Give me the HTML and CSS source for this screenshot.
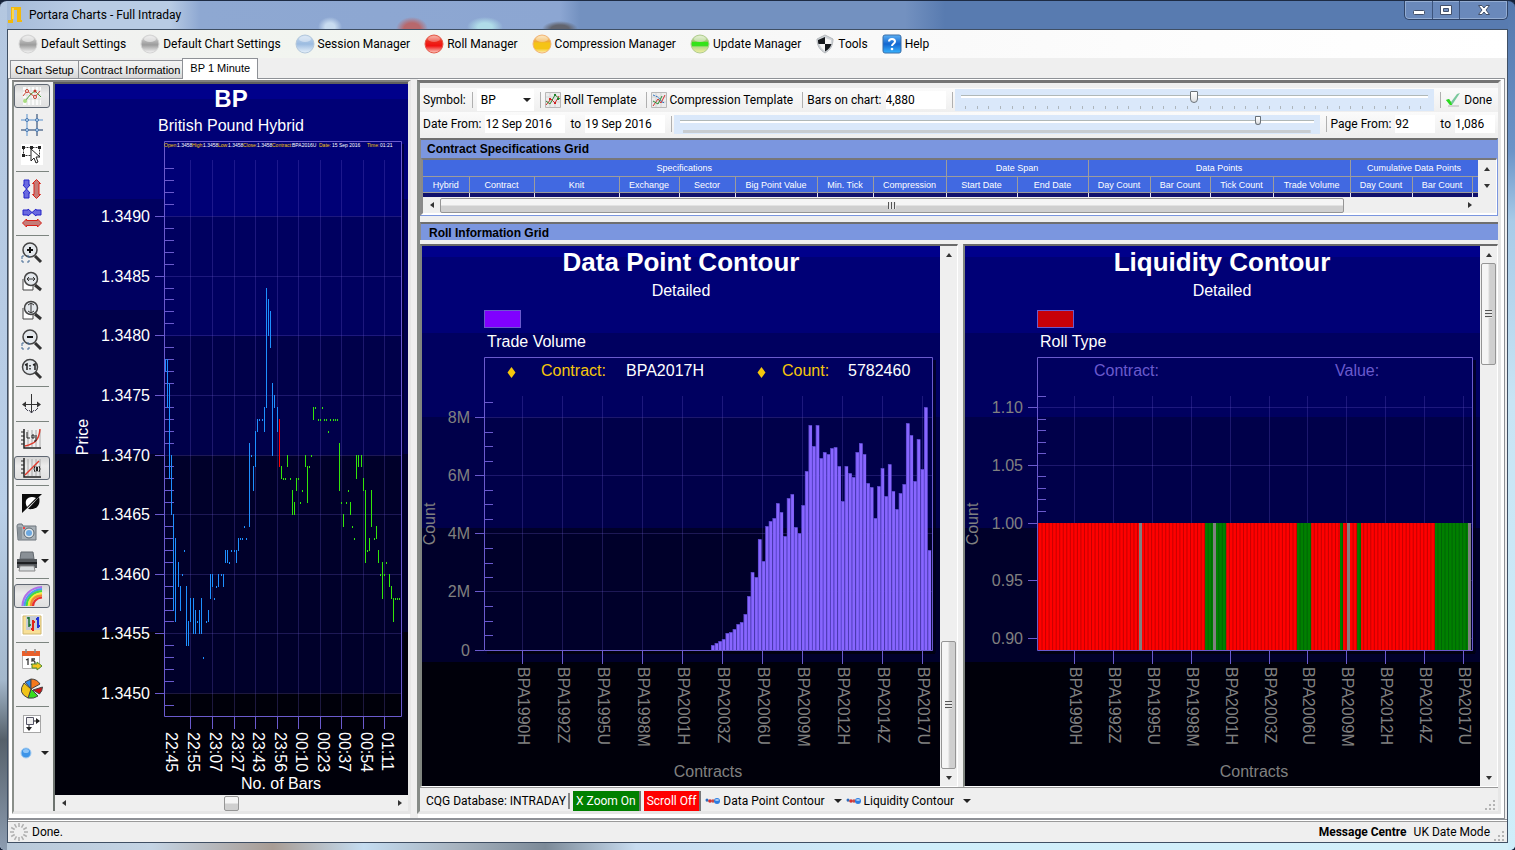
FILE: index.html
```html
<!DOCTYPE html>
<html lang="en">
<head>
<meta charset="utf-8">
<title>Portara Charts - Full Intraday</title>
<link rel="stylesheet" href="styles.css">
</head>
<body>
<div class="window">
  <header class="titlebar">
    <svg class="logo" width="16" height="18" viewBox="0 0 16 18"><path d="M3 1h10v13h1v2H9V4H6v9H5v4H0v-3h3z" fill="#f2b90c"/><path d="M4 2h2v11H4z" fill="#fcd64a"/></svg>
    <h1 class="title">Portara Charts - Full Intraday</h1>
    <div class="window-buttons">
      <button class="wbtn" aria-label="Minimise"><svg width="14" height="12" viewBox="0 0 14 12"><rect x="1.500" y="6.500" width="11" height="4" rx="1" fill="#fff" stroke="#43506a"/></svg></button>
      <button class="wbtn" aria-label="Maximise"><svg width="14" height="12" viewBox="0 0 14 12"><path d="M1.500 1.500h11v9h-11z" fill="#fff" stroke="#43506a"/><path d="M4.500 4.500h5v3h-5z" fill="#7390bf" stroke="#43506a"/></svg></button>
      <button class="wbtn wbtn-close" aria-label="Close"><svg width="14" height="12" viewBox="0 0 14 12"><path d="M1.500 1.500h3.500L7 4l2-2.500h3.500L9 6l3.500 4.500H9L7 8l-2 2.500H1.500L5 6z" fill="#fff" stroke="#43506a"/></svg></button>
    </div>
  </header>

  <div class="client">
    <svg class="defs" width="0" height="0" aria-hidden="true">
      <defs>
        <linearGradient id="gGray" x2="0" y2="1"><stop offset="0" stop-color="#e4e4e4"/><stop offset=".35" stop-color="#b4b4b4"/><stop offset=".55" stop-color="#9c9c9c"/><stop offset="1" stop-color="#f8f8f8"/></linearGradient>
        <linearGradient id="gBlue" x2="0" y2="1"><stop offset="0" stop-color="#c9dcf0"/><stop offset=".5" stop-color="#9bbbe0"/><stop offset="1" stop-color="#e8f2fb"/></linearGradient>
        <linearGradient id="gRed" x2="0" y2="1"><stop offset="0" stop-color="#f4a090"/><stop offset=".35" stop-color="#ec2a1c"/><stop offset=".6" stop-color="#f01010"/><stop offset="1" stop-color="#fbd0c4"/></linearGradient>
        <linearGradient id="gAmber" x2="0" y2="1"><stop offset="0" stop-color="#fbe2b0"/><stop offset=".35" stop-color="#efa83c"/><stop offset=".45" stop-color="#f5c416"/><stop offset=".75" stop-color="#f5c416"/><stop offset="1" stop-color="#fdf0c0"/></linearGradient>
        <linearGradient id="gGreen" x2="0" y2="1"><stop offset="0" stop-color="#dcecc4"/><stop offset=".35" stop-color="#9cc86c"/><stop offset=".42" stop-color="#2ee612"/><stop offset=".6" stop-color="#3ade20"/><stop offset=".66" stop-color="#b4d888"/><stop offset="1" stop-color="#f4f0a0"/></linearGradient>
        <linearGradient id="gHelp" x2="0" y2="1"><stop offset="0" stop-color="#5cb0f4"/><stop offset=".5" stop-color="#1466d0"/><stop offset="1" stop-color="#38b4ff"/></linearGradient>
      </defs>
    </svg>

    <nav class="menu">
      <button class="menu-item"><svg width="20" height="20" viewBox="0 0 20 20"><circle cx="10" cy="10" r="9" fill="url(#gGray)" stroke="#d4d4d4"/><ellipse cx="10" cy="5" rx="6" ry="3" fill="#fff" opacity=".5"/></svg>Default Settings</button>
      <button class="menu-item"><svg width="20" height="20" viewBox="0 0 20 20"><circle cx="10" cy="10" r="9" fill="url(#gGray)" stroke="#d4d4d4"/><ellipse cx="10" cy="5" rx="6" ry="3" fill="#fff" opacity=".5"/></svg>Default Chart Settings</button>
      <button class="menu-item"><svg width="20" height="20" viewBox="0 0 20 20"><circle cx="10" cy="10" r="9" fill="url(#gBlue)" stroke="#b4c8dc"/><ellipse cx="10" cy="5" rx="6" ry="3" fill="#fff" opacity=".4"/></svg>Session Manager</button>
      <button class="menu-item"><svg width="20" height="20" viewBox="0 0 20 20"><circle cx="10" cy="10" r="9" fill="url(#gRed)" stroke="#e45a4a"/><ellipse cx="10" cy="5" rx="6" ry="3" fill="#fff" opacity=".3"/></svg>Roll Manager</button>
      <button class="menu-item"><svg width="20" height="20" viewBox="0 0 20 20"><circle cx="10" cy="10" r="9" fill="url(#gAmber)" stroke="#f2b478"/><ellipse cx="10" cy="5" rx="6" ry="3" fill="#fff" opacity=".35"/></svg>Compression Manager</button>
      <button class="menu-item"><svg width="20" height="20" viewBox="0 0 20 20"><circle cx="10" cy="10" r="9" fill="url(#gGreen)" stroke="#b0cc90"/><ellipse cx="10" cy="5" rx="6" ry="3" fill="#fff" opacity=".4"/></svg>Update Manager</button>
      <button class="menu-item"><svg width="20" height="20" viewBox="0 0 20 20"><path d="M10 1l8 4c0 7-3 11-8 14C5 16 2 12 2 5z" fill="#d0d4d8" stroke="#b4b8bc"/><path d="M10 3v7H3.500C3 8 3 7 3 6zM10 10h6.500c-1 3-3 5.500-6.500 7.500z" fill="#15181c"/><path d="M10 4l6 2c0 2 0 3-.5 4H10zM4.500 10H10v7C7.500 15 5.500 13 4.500 10z" fill="#f4f4f4"/></svg>Tools</button>
      <button class="menu-item"><svg width="20" height="20" viewBox="0 0 20 20"><rect x="1" y="1" width="18" height="18" rx="2" fill="url(#gHelp)" stroke="#3a6ea8"/><path d="M7 7.500C7 4 13 4 13 7.500c0 2-3 2.500-3 4.500" fill="none" stroke="#fff" stroke-width="2"/><circle cx="10" cy="15" r="1.300" fill="#fff"/></svg>Help</button>
    </nav>

    <div class="tabs" role="tablist">
      <button class="tab" role="tab">Chart Setup</button>
      <button class="tab" role="tab">Contract Information</button>
      <button class="tab tab-active" role="tab" aria-selected="true">BP 1 Minute</button>
    </div>

    <main class="workspace">
      <section class="price-panel">
        <div class="tools">
          <button class="tool pressed" aria-label="Crosshair"><svg width="22" height="22" viewBox="0 0 22 22"><path d="M2 2h18v18H2z" fill="#fafafa"/><path d="M6 2v18M10 2v18M14 2v18M18 2v18M2 6h18M2 10h18M2 14h18" stroke="#d8dcd8" fill="none"/><path d="M4 16l6-7 4-3 6 6" fill="none" stroke="#4a9a3c"/><path d="M2 11l4-5 8 6 5-6" fill="none" stroke="#d04a3c"/><g fill="#fff" stroke="#c03a2c"><circle cx="6" cy="6" r="1.500"/><circle cx="14" cy="12" r="1.500"/></g><circle cx="14" cy="6" r="1.500" fill="#c03a2c"/><circle cx="4" cy="16" r="2" fill="#a8dc80"/></svg></button>
          <button class="tool" aria-label="Grid"><svg width="22" height="22" viewBox="0 0 22 22"><path d="M6 0v22M0 6h22" stroke="#8ab0d8" stroke-width="1.500"/><path d="M16 0v22M0 16h22" stroke="#5c7494" stroke-width="1.500"/><g fill="#c4dcf4" stroke="#4878b0"><circle cx="6" cy="6" r="1.500"/><circle cx="16" cy="6" r="1.500"/><circle cx="6" cy="16" r="1.500"/><circle cx="16" cy="16" r="1.500"/></g></svg></button>
          <button class="tool" aria-label="Select"><svg width="22" height="22" viewBox="0 0 22 22"><path d="M0 1h22v21H0z" fill="#fff"/><path d="M2.500 4.500h16v8h-16z" fill="none" stroke="#333" stroke-dasharray="2 1"/><path d="M1 3h3v3H1zM9 3h3v3H9zM17 3h3v3h-3zM1 11h3v3H1z" fill="#222"/><path d="M10 6v12l3-3 2 5 2-1-2-5h4z" fill="#fff" stroke="#222"/></svg></button>
          <hr class="tool-sep">
          <button class="tool" aria-label="Fit vertical"><svg width="22" height="22" viewBox="0 0 22 22"><path d="M3 2h5v5h1l-3.500 4L2 7h1zM3 20h5v-5h1l-3.500-4L2 15h1z" fill="#6a6ae0" stroke="#2424c8"/><path d="M15.500 1.500l4 4h-1.500v11h1.500l-4 4-4-4H13v-11h-1.500z" fill="#c47c78" stroke="#d82018"/></svg></button>
          <button class="tool" aria-label="Fit horizontal"><svg width="22" height="22" viewBox="0 0 22 22"><path d="M2 3h5V2l4 3.500L7 9V8H2zM20 3h-5V2l-4 3.500L15 9V8h5z" fill="#6a6ae0" stroke="#2424c8"/><path d="M1.500 16l4-4v1.500h11V12l4 4-4 4v-1.500h-11V20z" fill="#c47c78" stroke="#d82018"/></svg></button>
          <hr class="tool-sep">
          <button class="tool" aria-label="Zoom in"><svg width="22" height="22" viewBox="0 0 22 22"><path d="M14 14l6 6" stroke="#333" stroke-width="3"/><circle cx="9" cy="8" r="7" fill="#e4e8ec" stroke="#444" stroke-width="1.500"/><path d="M6 8h6M9 5v6" stroke="#111" stroke-width="2"/><path d="M1 17v-3h2M6 14h2v2M8 18v2H6M3 20H1v-2" fill="none" stroke="#456a94"/></svg></button>
          <button class="tool" aria-label="Zoom horizontally"><svg width="22" height="22" viewBox="0 0 22 22"><path d="M2 8v11h10v-5" fill="#fff" stroke="#444"/><path d="M14 14l6 5" stroke="#333" stroke-width="3"/><circle cx="10" cy="8" r="6.500" fill="#e4e8ec" stroke="#444" stroke-width="1.500"/><path d="M6 8h8M8 6L6 8l2 2M12 6l2 2-2 2" fill="none" stroke="#333"/></svg></button>
          <button class="tool" aria-label="Zoom vertically"><svg width="22" height="22" viewBox="0 0 22 22"><path d="M2 8v11h10v-5" fill="#fff" stroke="#444"/><path d="M14 14l6 5" stroke="#333" stroke-width="3"/><circle cx="10" cy="8" r="6.500" fill="#e4e8ec" stroke="#444" stroke-width="1.500"/><path d="M10 3v10M7 5l3-2 3 2M7 11l3 2 3-2" fill="none" stroke="#333"/></svg></button>
          <button class="tool" aria-label="Zoom out"><svg width="22" height="22" viewBox="0 0 22 22"><path d="M14 14l6 6" stroke="#333" stroke-width="3"/><circle cx="9" cy="8" r="7" fill="#e4e8ec" stroke="#444" stroke-width="1.500"/><path d="M6 8h6" stroke="#111" stroke-width="2"/><path d="M1 17v-3h2M6 14h2v2M8 18v2H6M3 20H1v-2" fill="none" stroke="#456a94"/></svg></button>
          <button class="tool" aria-label="Actual size"><svg width="22" height="22" viewBox="0 0 22 22"><path d="M14 14l6 6" stroke="#333" stroke-width="3"/><circle cx="9" cy="9" r="7.500" fill="#e4e8ec" stroke="#444" stroke-width="1.500"/><path d="M4 7l2-1v6M12 7l2-1v6M9 7v1.500M9 10v1.500" fill="none" stroke="#222" stroke-width="1.500"/></svg></button>
          <hr class="tool-sep">
          <button class="tool" aria-label="Pan"><svg width="22" height="22" viewBox="0 0 22 22"><path d="M10.500 1v19M3 11.500h15" stroke="#333"/><path d="M1 11.500l4-3v6zM20 11.500l-4-3v6z" fill="#333"/><path d="M8 17l2.500 3 2.500-3M4 15l3 3M17 15l-3 3" stroke="#445" fill="none"/></svg></button>
          <hr class="tool-sep">
          <button class="tool" aria-label="Logarithmic scale"><svg width="22" height="22" viewBox="0 0 22 22"><path d="M3 1v19h17" fill="none" stroke="#222" stroke-width="1.500"/><path d="M7 2v17M11 2v17M15 2v17M19 2v17" stroke="#a8a8a8"/><path d="M0 4h3M0 8h3M0 12h3M0 16h3" stroke="#222"/><path d="M4 18c9-2 14-5 15-17" fill="none" stroke="#e03a2c" stroke-width="1.500"/><path d="M6 4v6h3M11 7v3h2V7zM15 7v6h-2" fill="none" stroke="#222"/></svg></button>
          <button class="tool pressed" aria-label="Linear scale"><svg width="22" height="22" viewBox="0 0 22 22"><path d="M3 1v19h17" fill="none" stroke="#222" stroke-width="1.500"/><path d="M7 2v17M11 2v17M15 2v17M19 2v17" stroke="#a8a8a8"/><path d="M0 4h3M0 8h3M0 12h3M0 16h3" stroke="#222"/><path d="M4 18L18 4" stroke="#e03a2c" stroke-width="1.500"/><path d="M14 9q-2 3 0 6M18 9q2 3 0 6M15.500 10h1v4h-1z" fill="none" stroke="#222"/></svg></button>
          <hr class="tool-sep">
          <button class="tool" aria-label="Invert"><svg width="22" height="22" viewBox="0 0 22 22"><path d="M1 2h20L1 21z" fill="#0a0a0a"/><path d="M18 5c2 8-2 13-11 12z" fill="#0a0a0a"/><path d="M6 15C2 8 8 3 15 6z" fill="#fff"/></svg></button>
          <button class="tool split" aria-label="Snapshot"><svg width="22" height="22" viewBox="0 0 22 22"><path d="M1 5q0-2 2-2h3l1 2h13v14H2z" fill="#a8b0b6" stroke="#6c757c"/><path d="M2 6h4v12H2z" fill="#8c959c"/><circle cx="13" cy="12" r="5" fill="#dfe6ea" stroke="#5a656e"/><circle cx="13" cy="12" r="3" fill="#6ca8e0"/><path d="M7 6h2v2H7z" fill="#e44"/></svg><i class="caret"></i></button>
          <button class="tool split" aria-label="Print"><svg width="22" height="22" viewBox="0 0 22 22"><path d="M4 9l1-7h12l1 7z" fill="#8a9096" stroke="#62686e"/><path d="M1 9h20v9H1z" fill="#54585c"/><path d="M1 12h20v2H1z" fill="#1e2022"/><path d="M4 16h14l1 5H3z" fill="#d8dcde" stroke="#888"/></svg><i class="caret"></i></button>
          <hr class="tool-sep">
          <button class="tool pressed" aria-label="Palette"><svg width="22" height="22" viewBox="0 0 22 22"><g fill="none" stroke-width="2.200"><path d="M1.500 21C2 10 10 2.500 21 2" stroke="#b070e8"/><path d="M3.600 21C4 12 11 5 21 4.100" stroke="#4a9af0"/><path d="M5.700 21C6 13 12 7 21 6.200" stroke="#44d844"/><path d="M7.800 21C8 14 13 9 21 8.300" stroke="#f4ec3c"/><path d="M9.900 21C10 15 14 11 21 10.400" stroke="#f08a30"/><path d="M12 21c0-4 3-8 9-8.500" stroke="#e83030"/></g></svg></button>
          <button class="tool" aria-label="Bar style"><svg width="22" height="22" viewBox="0 0 22 22"><path d="M0 0h22v22H0z" fill="#fff"/><path d="M2 2h18v18H2z" fill="#f8e098" stroke="#d0b870"/><path d="M5 2h14v14H5z" fill="#c8ccd4"/><path d="M8 3v10M6 4h2M8 11h2" stroke="#18702c" stroke-width="1.500"/><path d="M12 6v11M10 15h2M12 8h2" stroke="#e02018" stroke-width="2"/><path d="M17 3v11M15 5h2M17 12h2" stroke="#2030d8" stroke-width="2"/></svg></button>
          <hr class="tool-sep">
          <button class="tool" aria-label="Go to date"><svg width="22" height="22" viewBox="0 0 22 22"><path d="M1.500 3.500h17v16h-17z" fill="#fff" stroke="#b0b0b0"/><path d="M1 2h18v5H1z" fill="#e8602c"/><path d="M5 0v4M14 0v4" stroke="#888" stroke-width="1.500"/><path d="M5 11l2-1v6M14 10h-3v2q3-1 3 2t-4 1" fill="none" stroke="#333" stroke-width="1.300"/><path d="M11 15h5v-2l5 4-5 4v-2h-5z" fill="#f4c420" stroke="#4c9030"/></svg></button>
          <button class="tool" aria-label="Pie"><svg width="22" height="22" viewBox="0 0 22 22"><g stroke="#444"><path d="M10 11L4 4l6-3z" fill="#2c8cf0"/><path d="M10 11V1q6 0 9 5z" fill="#f4781c"/><path d="M12 12l9.500-3q0 4-3 7z" fill="#cc1414"/><path d="M10 11l7 7q-4 3-10 2z" fill="#38dc1c"/><path d="M10 11L7 20Q-4 15 3 5z" fill="#f0c418"/></g></svg></button>
          <hr class="tool-sep">
          <button class="tool" aria-label="Arrange"><svg width="22" height="22" viewBox="0 0 22 22"><path d="M2.500 2.500h17v17h-17z" fill="#fff" stroke="#555" stroke-dasharray="1 1"/><path d="M5.500 4.500h7v7h-7z" fill="#f0f0f0" stroke="#556"/><path d="M13 8h5M8 12v5" stroke="#222"/><path d="M19 8l-4-3v6zM8 18l-3-4h6z" fill="#222"/></svg></button>
          <button class="tool split" aria-label="Marker"><svg width="22" height="22" viewBox="0 0 22 22"><circle cx="10" cy="11" r="5" fill="#3c94e8" stroke="#a4ccf0"/><ellipse cx="10" cy="9" rx="3" ry="2" fill="#8cc4f8"/></svg><i class="caret"></i></button>
        </div>
        <div class="price-view">
          <svg class="chart price-chart" id="price" viewBox="55 84 353 711" role="img" aria-label="BP British Pound Hybrid price chart"></svg>
          <div class="hscroll">
            <button class="sb-btn" aria-label="Scroll left"><i class="tri left"></i></button>
            <span class="gap-a"></span><span class="thumb small"></span><span class="gap-b"></span>
            <button class="sb-btn" aria-label="Scroll right"><i class="tri right"></i></button>
          </div>
        </div>
      </section>

      <section class="data-panel">
        <form class="bar bar-first">
          <label for="symbol">Symbol:</label>
          <span class="sep"></span>
          <span class="select-wrap"><select id="symbol" class="field"><option>BP</option></select><i class="caret"></i></span>
          <span class="sep"></span>
          <button type="button" class="bar-btn"><svg width="16" height="16" viewBox="0 0 16 16"><path d="M.5.500h15v15H.5z" fill="#ececec" stroke="#b8b8b8"/><path d="M5 1v14M10 1v14M1 5h14M1 10h14" stroke="#d4d4d4"/><path d="M1 13l5-6 4 4 4-7" fill="none" stroke="#d03030"/><path d="M1 9l4 3 5-9 5 4" fill="none" stroke="#2c8c34"/><path d="M4 6h2v2H4zM9 10h2v2H9z" fill="#d02020"/><path d="M9 2h2v2H9zM12 6h2v2h-2z" fill="#208028"/></svg>Roll Template</button>
          <span class="sep"></span>
          <button type="button" class="bar-btn"><svg width="16" height="16" viewBox="0 0 16 16"><path d="M.5.500h15v15H.5z" fill="#ececec" stroke="#b8b8b8"/><path d="M5 1v14M10 1v14M1 5h14M1 10h14" stroke="#d4d4d4"/><path d="M2 14l5-7 3 4 4-8" fill="none" stroke="#d03030"/><path d="M2 3l5 2 4 5 3 1" fill="none" stroke="#2c74c0" stroke-dasharray="2 1"/><path d="M2 9l5 3 4-8" fill="none" stroke="#2c8c34"/></svg>Compression Template</button>
          <span class="sep"></span>
          <label for="bars">Bars on chart:</label>
          <input id="bars" class="field field-bars" type="text" value="4,880">
          <span class="sep"></span>
          <span class="slider slider-ticks"><input type="range" class="range range-big" aria-label="Bars on chart slider" min="0" max="40" value="20"></span>
          <span class="sep"></span>
          <button type="button" class="bar-btn"><svg width="16" height="16" viewBox="0 0 16 16"><path d="M3 14h11" stroke="#b4b4b4"/><path d="M1 8l3-1 2 3 6-8 3-1-8 12H5z" fill="#7ac89c"/><path d="M1 8l3-1 2 3 1 3H5z" fill="#2cdc1c"/></svg>Done</button>
        </form>
        <form class="bar">
          <label for="from">Date From:</label>
          <input id="from" class="field field-date" type="text" value="12 Sep 2016">
          <label for="to">to</label>
          <input id="to" class="field field-date" type="text" value="19 Sep 2016">
          <span class="sep"></span>
          <span class="slider slider-dense"><input type="range" class="range range-small" aria-label="Page slider" min="0" max="1000" value="917"></span>
          <span class="sep"></span>
          <label for="pfrom">Page From:</label>
          <input id="pfrom" class="field field-page" type="text" value="92">
          <label for="pto">to</label>
          <input id="pto" class="field field-page" type="text" value="1,086">
        </form>

        <section class="spec">
          <h2 class="heading">Contract Specifications Grid</h2>
          <div class="spec-body">
            <table class="grid">
              <colgroup><col><col><col><col><col><col><col><col><col><col><col><col><col><col><col><col><col></colgroup>
              <thead>
                <tr><th colspan="8">Specifications</th><th colspan="2">Date Span</th><th colspan="4">Data Points</th><th colspan="3">Cumulative Data Points</th></tr>
                <tr><th>Hybrid</th><th>Contract</th><th>Knit</th><th>Exchange</th><th>Sector</th><th>Big Point Value</th><th>Min. Tick</th><th>Compression</th><th>Start Date</th><th>End Date</th><th>Day Count</th><th>Bar Count</th><th>Tick Count</th><th>Trade Volume</th><th>Day Count</th><th>Bar Count</th><th></th></tr>
              </thead>
              <tbody><tr><td></td><td></td><td></td><td></td><td></td><td></td><td></td><td></td><td></td><td></td><td></td><td></td><td></td><td></td><td></td><td></td><td></td></tr></tbody>
            </table>
            <div class="vscroll">
              <button class="sb-btn" aria-label="Scroll up"><i class="tri up"></i></button>
              <button class="sb-btn" aria-label="Scroll down"><i class="tri down"></i></button>
            </div>
            <div class="hscroll grid-scroll">
              <button class="sb-btn" aria-label="Scroll left"><i class="tri left"></i></button>
              <span class="thumb wide"><i class="grip"></i></span><span class="rest"></span>
              <button class="sb-btn" aria-label="Scroll right"><i class="tri right"></i></button>
            </div>
          </div>
        </section>

        <h2 class="heading heading-roll">Roll Information Grid</h2>

        <div class="contours">
          <div class="contour">
            <svg class="chart contour-chart" id="volume" viewBox="422 246 518 540" role="img" aria-label="Data Point Contour"></svg>
            <div class="vscroll">
              <button class="sb-btn" aria-label="Scroll up"><i class="tri up"></i></button>
              <span class="above-low"></span><span class="thumb low"><i class="grip"></i></span>
              <button class="sb-btn" aria-label="Scroll down"><i class="tri down"></i></button>
            </div>
          </div>
          <div class="contour">
            <svg class="chart contour-chart" id="liquidity" viewBox="965 246 515 540" role="img" aria-label="Liquidity Contour"></svg>
            <div class="vscroll">
              <button class="sb-btn" aria-label="Scroll up"><i class="tri up"></i></button>
              <span class="thumb high"><i class="grip"></i></span><span class="below-high"></span>
              <button class="sb-btn" aria-label="Scroll down"><i class="tri down"></i></button>
            </div>
          </div>
        </div>

        <footer class="footbar">
          <span class="db">CQG Database: INTRADAY</span>
          <button class="flag flag-on">X Zoom On</button>
          <button class="flag flag-off">Scroll Off</button>
          <button class="drop"><svg width="16" height="8" viewBox="0 0 16 8"><path d="M1 4h12" stroke="#999"/><circle cx="2" cy="3" r="1.500" fill="#2c6cc0"/><circle cx="5" cy="4" r="1.800" fill="#d83030"/><circle cx="8" cy="4" r="1.800" fill="#c84848"/><circle cx="12" cy="4" r="3" fill="#2c7ce0"/><ellipse cx="12" cy="3" rx="2" ry="1" fill="#a8ccf4"/></svg>Data Point Contour<i class="caret"></i></button>
          <button class="drop"><svg width="16" height="8" viewBox="0 0 16 8"><path d="M1 4h12" stroke="#999"/><circle cx="2" cy="3" r="1.500" fill="#2c6cc0"/><circle cx="5" cy="4" r="1.800" fill="#d83030"/><circle cx="8" cy="4" r="1.800" fill="#c84848"/><circle cx="12" cy="4" r="3" fill="#2c7ce0"/><ellipse cx="12" cy="3" rx="2" ry="1" fill="#a8ccf4"/></svg>Liquidity Contour<i class="caret"></i></button>
          <svg class="size-grip" width="12" height="12" viewBox="0 0 12 12"><path d="M9 1h2v2H9zM9 5h2v2H9zM9 9h2v2H9zM5 5h2v2H5zM5 9h2v2H5zM1 9h2v2H1z" fill="#b4b4b4"/></svg>
        </footer>
      </section>
    </main>

    <footer class="status">
      <svg width="20" height="20" viewBox="0 0 20 20"><path d="M10 1v4M10 15v4M1 10h4M15 10h4M5.500 2.200l2 3.500M12.500 14.300l2 3.500M2.200 5.500l3.500 2M14.300 12.500l3.500 2M2.200 14.500l3.500-2M14.300 7.500l3.500-2M5.500 17.800l2-3.500M12.500 5.700l2-3.500" stroke="#b0b0b0" stroke-width="1.500"/></svg>
      <span>Done.</span>
      <strong class="centre">Message Centre</strong>
      <span>UK Date Mode</span>
      <svg class="size-grip" width="12" height="12" viewBox="0 0 12 12"><path d="M9 1h2v2H9zM9 5h2v2H9zM9 9h2v2H9zM5 5h2v2H5zM5 9h2v2H5zM1 9h2v2H1z" fill="#b4b4b4"/></svg>
    </footer>
  </div>
</div>
<script src="charts.js"></script>
</body>
</html>
```

FILE: styles.css
```css
* { box-sizing: border-box; }

html, body { height: 100%; margin: 0; }

body {
  overflow: hidden;
  background: #16233a;
  color: #000;
  font: 12px/16px Roboto, "Open Sans", sans-serif;
}

button, input, select {
  margin: 0;
  padding: 0;
  border: 0;
  background: none;
  color: inherit;
  font: inherit;
}

svg { display: block; flex: none; }
h1, h2 { margin: 0; font: inherit; }
.defs { position: absolute; }

/* Window frame */
.window {
  display: flex;
  flex-direction: column;
  height: 100%;
  padding: 0 7px 7px;
  border-top: 1px solid #1d2b44;
  border-radius: 7px 7px 5px 5px;
  background:
    linear-gradient(#5578ad 0, #6c94c8 150px, #a8cbe8 220px, #c8e4f4 400px, #cfeefa 100%) right / 7px 100% no-repeat,
    linear-gradient(#b4c7e0 0, #b9cfe8 60%, #a4b8cc 80%, #55606a 87%, #8c9cb0 100%) left / 7px 100% no-repeat,
    linear-gradient(90deg, #b8c8d8 0, #c4d4e4 10%, #a89c94 18%, #c4dcf0 24%, #a8b4c0 30%, #7c8a98 36%, #c8dcf0 42%, #cfeefa 60%, #d4f0fa 100%) bottom / 100% 7px no-repeat,
    radial-gradient(ellipse 16px 12px at 412px 28px, #b8686c 50%, transparent 100%),
    radial-gradient(ellipse 18px 10px at 485px 26px, #b0dce8 40%, transparent 100%),
    radial-gradient(ellipse 12px 10px at 330px 26px, #c8dcf0 40%, transparent 100%),
    radial-gradient(ellipse 18px 8px at 560px 28px, #62646e 50%, transparent 100%),
    linear-gradient(90deg, #a4bad8 0, #b8cbe4 80px, #b8cbe4 170px, #8ea8d2 200px, #8ca6d2 560px, #7391c0 580px, #7391c0 905px, #587bb0 945px, #587bb0 100%);
}

.titlebar {
  display: flex;
  align-items: center;
  flex: none;
  height: 28px;
  gap: 5px;
  padding-left: 1px;
}
.title { flex: 1; }
.window-buttons {
  display: flex;
  align-self: flex-start;
  height: 19px;
  border: 1px solid #2f4468;
  border-top: 0;
  border-radius: 0 0 5px 5px;
  box-shadow: inset 0 0 0 1px #93acd2;
  background: #6a89bb;
}
.wbtn {
  display: flex;
  align-items: center;
  justify-content: center;
  width: 27px;
}
.wbtn + .wbtn { border-left: 1px solid #3d547c; }
.wbtn-close { width: 48px; }

.client {
  display: flex;
  flex-direction: column;
  flex: 1;
  min-height: 0;
  border: 1px solid #3f4f64;
  background: #efefef;
}

/* Menu and tabs */
.menu {
  display: flex;
  align-items: center;
  flex: none;
  height: 28px;
  gap: 14px;
  padding-left: 10px;
  background: linear-gradient(90deg, #f0f0f0 0, #f2f5f0 300px, #f7f7f7 700px, #fdfdfd 1200px, #fff 100%);
}
.menu-item { display: flex; align-items: center; gap: 3px; white-space: nowrap; }

.tabs {
  display: flex;
  align-items: flex-end;
  flex: none;
  height: 20px;
  padding-left: 2px;
  font: 11px/14px "Liberation Sans", Arial, sans-serif;
}
.tab {
  height: 18px;
  padding: 0 4px;
  border: 1px solid #8e9196;
  border-bottom: 0;
  background: linear-gradient(#f4f4f4, #ebebeb 50%, #d6d6d6);
  white-space: nowrap;
}
.tab + .tab { margin-left: -1px; padding: 0 2px; }
.tab.tab-active {
  position: relative;
  height: 21px;
  margin-bottom: -1px;
  padding: 0 7px 2px;
  background: #fff;
}

/* Two panels */
.workspace {
  display: grid;
  grid-template-columns: minmax(0, 399fr) minmax(0, 1084fr);
  gap: 6px;
  flex: 1;
  min-height: 0;
  margin-right: 2px;
  padding: 1px 3px 4px;
  border: 1px solid #8e9196;
  background: linear-gradient(#efefef, #efefef) 27% 0 / 8px 100% no-repeat, #fff;
}

.price-panel {
  display: grid;
  grid-template-columns: 39px minmax(0, 1fr);
  min-height: 0;
  border: solid;
  border-width: 2px 3px 3px 2px;
  border-color: #808080 #e6e6e6 #e6e6e6 #8a8f8a;
  background: #efefef;
}

.tools {
  display: flex;
  flex-direction: column;
  gap: 5px;
  min-height: 0;
  padding: 2px 3px 0 0;
}
.tool {
  display: flex;
  align-items: center;
  justify-content: center;
  flex: none;
  height: 24px;
  border: 1px solid transparent;
  border-radius: 3px;
}
.tool.pressed {
  border-color: #5f6772;
  background: linear-gradient(#d4d4d4, #ececec 40%, #e0e0e0);
}
.tool.split { justify-content: flex-start; gap: 3px; padding-left: 1px; }
.tool-sep { flex: none; width: 33px; height: 1px; margin: 0 auto; border: 0; background: #7d8580; }

.caret {
  width: 0;
  height: 0;
  border: 4px solid transparent;
  border-top-color: #222;
  border-bottom: 0;
}

.price-view {
  display: flex;
  flex-direction: column;
  min-height: 0;
  border-top: 2px solid #5f5f5f;
  border-left: 2px solid #6e7470;
}
.chart { min-height: 0; font-family: "Liberation Sans", Arial, sans-serif; }
.price-chart {
  flex: 1;
  width: 100%;
  background: #00000a;
}
.contour-chart { flex: 1; min-width: 0; height: 100%; background: #00000a; }

/* Scroll bars */
.hscroll {
  display: flex;
  align-items: center;
  flex: none;
  height: 16px;
  background: #efefef;
}
.vscroll {
  display: flex;
  flex-direction: column;
  align-items: center;
  flex: none;
  width: 17px;
  background: #efefef;
}
.sb-btn {
  display: flex;
  align-items: center;
  justify-content: center;
  flex: none;
  width: 17px;
  height: 17px;
}
.tri { border: 3px solid transparent; }
.tri.left { border-right: 4px solid #333; border-left: 0; }
.tri.right { border-left: 4px solid #333; border-right: 0; }
.tri.up { border-bottom: 4px solid #333; border-top: 0; }
.tri.down { border-top: 4px solid #333; border-bottom: 0; }

.thumb {
  display: flex;
  align-items: center;
  justify-content: center;
  border: 1px solid #959595;
  border-radius: 2px;
  background: linear-gradient(#f5f5f5 45%, #cfcfcf 55%);
}
.thumb.small { flex: none; width: 15px; height: 15px; }
.gap-a { flex: 152; }
.gap-b { flex: 152; }
.thumb.wide { flex: 901; height: 15px; }
.rest { flex: 117; }
.vscroll .thumb { width: 15px; background: linear-gradient(90deg, #f5f5f5 45%, #cfcfcf 60%); }
.above-low { flex: 379; }
.thumb.low { flex: 127; }
.thumb.high { flex: 100; }
.below-high { flex: 406; }
.grip { width: 8px; height: 7px; background: repeating-linear-gradient(90deg, #555 0 1px, #e8e8e8 1px 3px); }
.vscroll .grip { width: 7px; height: 8px; background: repeating-linear-gradient(#555 0 1px, #e8e8e8 1px 3px); }

/* Right panel */
.data-panel {
  display: flex;
  flex-direction: column;
  min-height: 0;
  border: solid;
  border-width: 3px;
  border-color: #747474 #e6e6e6 #e6e6e6 #868b88;
  background: #efefef;
}

.bar {
  display: flex;
  align-items: center;
  flex: none;
  height: 24px;
  padding: 0 3px;
  background: linear-gradient(#fbfbfb, #f4f4f4 60%, #efefef);
  white-space: nowrap;
}
.bar-first { margin-top: 5px; }
.sep { flex: none; width: 1px; height: 16px; margin: 0 4px 0 6px; background: #b0b0b0; }
.bar-btn { display: flex; align-items: center; gap: 3px; padding-right: 3px; }
.field { height: 18px; background: #fff; }
.select-wrap { display: flex; align-items: center; width: 57px; background: #fff; padding: 2px 3px 2px 4px; }
.select-wrap .field { flex: 1; appearance: none; min-width: 0; }
.field-bars { width: 60px; margin-left: 4px; }
.field-date { width: 80px; margin: 0 5px 0 4px; }
.field-date ~ .field-date { margin-right: 0; }
.field-page { width: 40px; margin: 0 5px 0 4px; }
.field-page ~ .field-page { margin-right: 0; }

.slider { display: flex; flex: 1; min-width: 0; padding: 0 6px; background-color: #dae8fa; }
.slider-ticks {
  align-items: flex-start;
  height: 22px;
  margin: 0 0 0 -2px;
  padding-top: 2px;
}
.slider-dense { height: 19px; align-items: flex-start; margin-left: -2px; }
.range {
  appearance: none;
  width: 100%;
  height: 18px;
  margin: 0;
}
.range::-webkit-slider-thumb {
  appearance: none;
  width: 8px;
  height: 12px;
  border: 1px solid #6b7278;
  border-radius: 1px 1px 4px 4px;
  background: linear-gradient(#fff, #dcdfe2);
}
.range-big {
  background:
    linear-gradient(#b0b8b8, #b0b8b8) 0 4px / 100% 1px no-repeat,
    linear-gradient(#fff, #fff) 0 5px / 100% 2px no-repeat,
    repeating-linear-gradient(90deg, #aeb6bc 0 1px, transparent 1px 2.500%) 4px 15px / 100% 3px no-repeat;
}
.range-big::-webkit-slider-thumb { margin-bottom: 6px; }
.range-small {
  height: 18px;
  background:
    linear-gradient(#b0b8b8, #b0b8b8) 0 5px / 100% 1px no-repeat,
    linear-gradient(#fff, #fff) 0 6px / 100% 2px no-repeat,
    linear-gradient(#c8ccd0, #c8ccd0) 3px 15px / 99% 3px no-repeat;
}
.range-small::-webkit-slider-thumb { width: 6px; height: 9px; margin-bottom: 6px; }

.heading {
  flex: none;
  height: 18px;
  padding-left: 6px;
  background: #7b96df;
  font: bold 12px/18px "Liberation Sans", Arial, sans-serif;
}
.spec {
  flex: none;
  margin: 2px 0 0;
  border: solid;
  border-width: 2px 1px 1px;
  border-color: #6f6f6f #7b96df #7b96df #8c8c8c;
}
.spec-body {
  display: grid;
  grid-template-columns: minmax(0, 1fr) 18px;
  border-top: 2px solid #77777a;
  border-left: 2px solid #8a8a8a;
  border-right: 1px solid #fff;
  border-bottom: 2px solid #fff;
  background: #efefef;
}
.spec-body .vscroll { width: 18px; grid-row: span 2; }
.grid {
  width: 100%;
  table-layout: fixed;
  border-collapse: collapse;
  font: 9px/12px "Liberation Sans", Arial, sans-serif;
}
.grid th {
  height: 16px;
  padding: 1px 0 0;
  border-right: 1px solid #9c9c9c;
  border-bottom: 1px solid #9c9c9c;
  background: #4169e1;
  color: #fff;
  font-weight: normal;
  white-space: nowrap;
}
.grid td { height: 5px; padding: 0; border-right: 1px solid #e0e0f0; background: #10106c; }
.grid col:nth-child(1) { width: 46px; }
.grid col:nth-child(2) { width: 65px; }
.grid col:nth-child(3) { width: 85px; }
.grid col:nth-child(4) { width: 60px; }
.grid col:nth-child(5) { width: 56px; }
.grid col:nth-child(6) { width: 82px; }
.grid col:nth-child(7) { width: 56px; }
.grid col:nth-child(8) { width: 73px; }
.grid col:nth-child(9), .grid col:nth-child(10) { width: 71px; }
.grid col:nth-child(11), .grid col:nth-child(15) { width: 62px; }
.grid col:nth-child(12), .grid col:nth-child(16) { width: 60px; }
.grid col:nth-child(13) { width: 63px; }
.grid col:nth-child(14) { width: 77px; }
.grid col:nth-child(17) { width: 6px; }

.heading-roll {
  margin: 6px 0 4px;
  padding-left: 8px;
  border-top: 2px solid #6f6f6f;
  border-left: 1px solid #8c8c8c;
}

.contours {
  display: grid;
  grid-template-columns: minmax(0, 538fr) minmax(0, 535fr);
  gap: 5px;
  flex: 1;
  min-height: 0;
}
.contour {
  display: flex;
  min-height: 0;
  border: solid;
  border-width: 2px 1px 1px 2px;
  border-color: #6a6a6a #fff #fff #808580;
}

.footbar {
  display: flex;
  align-items: center;
  flex: none;
  height: 24px;
  padding: 2px 2px 0 6px;
  border-top: 1px solid #999;
  white-space: nowrap;
}
.db { padding-right: 2px; border-right: 2px solid #888; }
.flag { height: 20px; margin-left: 3px; padding: 0 3px; color: #fff; border-right: 2px solid #777; }
.flag-on { background: #008000; }
.flag-off { background: #f00; }
.drop { display: flex; align-items: center; gap: 2px; margin-left: 4px; }
.drop .caret { margin-left: 7px; }
.size-grip { align-self: flex-end; }
.footbar .size-grip { margin-left: auto; }

.status {
  display: flex;
  align-items: center;
  flex: none;
  height: 23px;
  gap: 3px;
  padding: 2px 2px 0 1px;
  border-top: 1px solid #8e9196;
  box-shadow: inset 0 1px #fff, inset 0 2px #9a9a9a;
}
.centre { margin-left: auto; padding-right: 4px; }
```

FILE: charts.js
```javascript
const NS = "http://www.w3.org/2000/svg";

function painter(id) {
  const root = document.getElementById(id);
  const add = (name, attrs, content) => {
    const node = document.createElementNS(NS, name);
    for (const key in attrs) node.setAttribute(key, attrs[key]);
    if (content !== undefined) node.textContent = content;
    root.appendChild(node);
    return node;
  };
  return {
    rect: (x, y, width, height, fill, extra) => add("rect", { x, y, width, height, fill, ...extra }),
    line: (x1, y1, x2, y2, stroke) =>
      add("path", { d: `M${x1} ${y1}L${x2} ${y2}`, stroke, "shape-rendering": "crispEdges" }),
    text: (x, y, content, fill, size = 16, extra) =>
      add("text", { x, y, fill, "font-size": size, ...extra }, content),
    path: (d, attrs) => add("path", { d, ...attrs })
  };
}

const AXIS = "#6a5acd";
const GRID = "rgba(106,90,205,.27)";
const SHADES = ["#00008b", "#000076", "#000060", "#00004a", "#00002a", "#00000a"];

function bands(p, x, width, edges) {
  for (let i = 0; i + 1 < edges.length; i++) {
    p.rect(x, edges[i], width, edges[i + 1] - edges[i], SHADES[SHADES.length - edges.length + 1 + i]);
  }
}

function drawPrice() {
  const p = painter("price");
  bands(p, 55, 353, [84, 99, 199, 310, 454, 632, 795]);
  p.rect(402, 144, 2, 575, "#000020", { opacity: 0.6 });
  bands(p, 165, 237, [141, 216, 336, 455, 693, 717]);
  p.text(231, 107, "BP", "#fff", 24, { "font-weight": "bold", "text-anchor": "middle" });
  p.text(231, 131, "British Pound Hybrid", "#fff", 16, { "text-anchor": "middle" });

  const y = pips => Math.round(693 - (pips - 50) * 11.925) + 0.5;
  for (let pips = 49; pips <= 94; pips++) {
    if (pips % 5 === 0 && pips <= 90) {
      p.line(165, y(pips), 402, y(pips), GRID);
      p.line(155, y(pips), 165, y(pips), AXIS);
      p.text(150, y(pips) + 5, "1.34" + pips, "#fff", 16, { "text-anchor": "end" });
    } else {
      p.line(165, y(pips), 174, y(pips), AXIS);
    }
  }
  const times = [[168.5, "22:45"], [190.5, "22:55"], [212.5, "23:07"], [234.5, "23:27"], [255.5, "23:43"],
    [277.5, "23:56"], [298.5, "00:10"], [320.5, "00:23"], [341.5, "00:37"], [363.5, "00:54"], [384.5, "01:11"]];
  times.forEach(([x, label], i) => {
    if (i) {
      p.line(x, 160, x, 716, GRID);
      p.line(x, 717, x, 729, AXIS);
    }
    p.text(732, -x + 3, label, "#fff", 16, { transform: "rotate(90)" });
  });
  p.path("M164.5 141.5H401.500V716.500H164.500Z", { fill: "none", stroke: AXIS });
  p.text(281, 789, "No. of Bars", "#fff", 16, { "text-anchor": "middle" });
  p.text(-437, 88, "Price", "#fff", 16, { transform: "rotate(-90)", "text-anchor": "middle" });

  const info = [[164, "Open:", 177, "1.3458"], [192, "High:", 203, "1.3458"], [218, "Low:", 228, "1.3458"],
    [243, "Close:", 257, "1.3458"], [272, "Contract:", 292, "BPA2016U"], [319, "Date:", 332, "15 Sep 2016"],
    [367, "Time:", 380, "01:21"]];
  for (const [lx, label, vx, value] of info) {
    p.text(lx, 147, label, "#f5c60c", 5);
    p.text(vx, 147, value, "#fff", 5);
  }

  /* x, high, low in pips above 1.3400 */
  const blue = [[165, 78, 77], [167, 78, 74], [169, 76, 68], [171, 70, 65], [173, 65, 57], [175, 63, 56],
    [178, 61, 59], [180, 59, 57], [182, 60, 60], [184, 62, 62], [186, 59, 54], [188, 56, 54], [190, 58, 56],
    [193, 58, 55], [195, 57, 55], [197, 56, 56], [199, 57, 55], [201, 58, 55], [203, 53, 53], [206, 56, 56],
    [208, 57, 56], [210, 60, 58], [212, 60, 59], [214, 58, 58], [216, 59, 59], [218, 60, 59], [221, 60, 60],
    [223, 60, 59], [225, 62, 61], [227, 62, 61], [229, 61, 61], [231, 62, 62], [234, 62, 62], [236, 62, 61],
    [238, 63, 62], [240, 63, 63], [242, 63, 63], [244, 64, 64], [246, 63, 63], [249, 71, 64], [251, 70, 70],
    [253, 69, 67], [255, 72, 69], [257, 73, 72], [259, 73, 73], [262, 73, 73], [264, 74, 72], [266, 84, 74],
    [268, 83, 80], [270, 82, 79], [272, 76, 70], [274, 75, 74], [277, 74, 72]];
  const red = [[279, 73, 69]];
  const green = [[281, 69, 68], [283, 68, 68], [285, 68, 68], [287, 70, 69], [290, 68, 68], [292, 67, 65],
    [294, 66, 65], [296, 68, 67], [298, 68, 68], [300, 66, 66], [302, 67, 67], [305, 70, 69], [307, 69, 66],
    [309, 69, 69], [311, 70, 70], [313, 74, 73], [315, 74, 74], [318, 73, 73], [320, 73, 73], [322, 74, 74],
    [324, 73, 73], [326, 73, 73], [328, 72, 72], [330, 73, 73], [333, 73, 73], [335, 73, 73], [337, 73, 73],
    [339, 71, 67], [341, 66, 66], [343, 65, 64], [346, 66, 66], [348, 67, 67], [350, 66, 65], [352, 64, 64],
    [354, 63, 63], [356, 70, 68], [358, 70, 69], [361, 70, 69], [363, 68, 67], [365, 67, 61], [367, 62, 62],
    [369, 63, 62], [371, 67, 64], [374, 63, 63], [376, 64, 63], [378, 62, 61], [380, 60, 60], [382, 61, 58],
    [384, 60, 60], [386, 61, 61], [389, 60, 59], [391, 59, 58], [393, 58, 56], [395, 58, 58], [397, 58, 58],
    [399, 58, 58]];
  for (const [series, color] of [[blue, "#1e90ff"], [red, "#ff0000"], [green, "#32e60a"]]) {
    for (const [x, high, low] of series) {
      p.rect(x, y(high) - 0.5, 1, y(low) - y(high) + (high === low ? 2 : 1), color);
    }
  }
}

function contourFrame(p, o) {
  bands(p, o.x0, o.width, [246, 257, 333, 417, 528, 662, 786]);
  p.rect(o.left + 3, 651, o.right - o.left, 3, "#000010");
  p.rect(o.right + 1, 360, 3, 293, "#000018", { opacity: 0.7 });
  p.text(o.mid, 271, o.title, "#fff", 26, { "font-weight": "bold", "text-anchor": "middle" });
  p.text(o.mid, 296, "Detailed", "#fff", 16, { "text-anchor": "middle" });
  p.rect(o.left + 0.5, 310.5, 36, 17, o.swatch, { stroke: AXIS });
  p.text(o.left + 3, 347, o.legend, "#fff");
  for (const [ty, label] of o.ticks) {
    p.line(o.left, ty, o.right, ty, GRID);
    p.line(o.left - 9, ty, o.left, ty, AXIS);
    p.text(o.left - 14, ty + 5, label, "#808080", 16, { "text-anchor": "end" });
  }
  for (const ty of o.minor) p.line(o.left, ty, o.left + 9, ty, AXIS);
  const names = ["1990H", "1992Z", "1995U", "1998M", "2001H", "2003Z", "2006U", "2009M", "2012H", "2014Z", "2017U"];
  names.forEach((name, i) => {
    const x = Math.round(o.first + i * o.step) + 0.5;
    p.line(x, 396, x, 650, GRID);
    p.line(x, 651, x, 664, AXIS);
    p.text(667, -x + 5, "BPA" + name, "#808080", 16, { transform: "rotate(90)" });
  });
  p.text(o.footMid, 777, "Contracts", "#808080", 16, { "text-anchor": "middle" });
  p.text(-524, o.x0 + 13, "Count", "#808080", 16, { transform: "rotate(-90)", "text-anchor": "middle" });
}

function border(p, left, right) {
  p.path(`M${left + 0.5} 357.500H${right + 0.5}V650.500H${left + 0.5}Z`, { fill: "none", stroke: AXIS });
}

function drawVolume() {
  const p = painter("volume");
  const minor = [];
  for (let i = 1; i < 18; i++) if (i % 4) minor.push(Math.round(650 - i * 14.56) + 0.5);
  contourFrame(p, {
    x0: 422, width: 518, left: 484, right: 932, mid: 681, footMid: 708, title: "Data Point Contour",
    legend: "Trade Volume", swatch: "#8000ff",
    ticks: [[417.5, "8M"], [475.5, "6M"], [533.5, "4M"], [591.5, "2M"], [650.5, "0"]],
    minor, first: 522, step: 40
  });
  p.text(541, 376, "Contract:", "#f5c60c");
  p.text(626, 376, "BPA2017H", "#fff");
  p.text(782, 376, "Count:", "#f5c60c");
  p.text(848, 376, "5782460", "#fff");
  for (const x of [511.5, 761.5]) p.path(`M${x} 367l4 5.500-4 5.500-4-5.500z`, { fill: "#f5c60c" });
  const tops = [645, 643, 641, 639, 633, 632, 629, 624, 622, 614, 596, 572, 577, 539, 561, 526, 521, 518, 503, 512,
    536, 498, 494, 527, 533, 505, 471, 425, 446, 425, 458, 452, 454, 448, 447, 466, 501, 466, 473, 477, 452, 443,
    454, 483, 487, 518, 486, 468, 496, 464, 491, 509, 493, 484, 423, 435, 481, 439, 469, 407, 550];
  tops.forEach((top, i) => {
    const x = 711 + i * 3.61;
    p.rect(x, top, 3.61, 650 - top, "#5a46cc");
    p.rect(x + 0.8, top + 1, 2.6, 650 - top, "#8866ff");
  });
  border(p, 484, 932);
}

function drawLiquidity() {
  const p = painter("liquidity");
  contourFrame(p, {
    x0: 965, width: 515, left: 1037, right: 1472, mid: 1222, footMid: 1254, title: "Liquidity Contour",
    legend: "Roll Type", swatch: "#c80008",
    ticks: [[407.5, "1.10"], [465.5, "1.05"], [523.5, "1.00"], [580.5, "0.95"], [638.5, "0.90"]],
    minor: [396.5, 419.5, 430.5, 442.5, 453.5, 476.5, 488.5, 499.5, 511.5], first: 1074, step: 38.9
  });
  p.text(1094, 376, "Contract:", AXIS);
  p.text(1335, 376, "Value:", AXIS);
  const red = "#ff0000", green = "#008000", gray = "#808080";
  const runs = [[1037, red], [1139, gray], [1142, red], [1205, green], [1213, gray], [1216, green], [1226, red],
    [1297, green], [1311, red], [1340, green], [1343, red], [1347, gray], [1350, red], [1357, green], [1361, red],
    [1435, green], [1468, gray], [1471, null]];
  for (let i = 0; i + 1 < runs.length; i++) {
    const [x, fill] = runs[i];
    p.rect(x, 523, runs[i + 1][0] - x, 127, fill);
  }
  for (let i = 0; i < 122; i++) {
    const x = 1038 + i * 3.535;
    const run = runs.filter(r => r[0] <= x).pop();
    if (run[1] !== gray) p.rect(x, 523, 1, 127, run[1] === red ? "#b00000" : "#005c08", { opacity: 0.75 });
  }
  border(p, 1037, 1472);
}

drawPrice();
drawVolume();
drawLiquidity();
```
